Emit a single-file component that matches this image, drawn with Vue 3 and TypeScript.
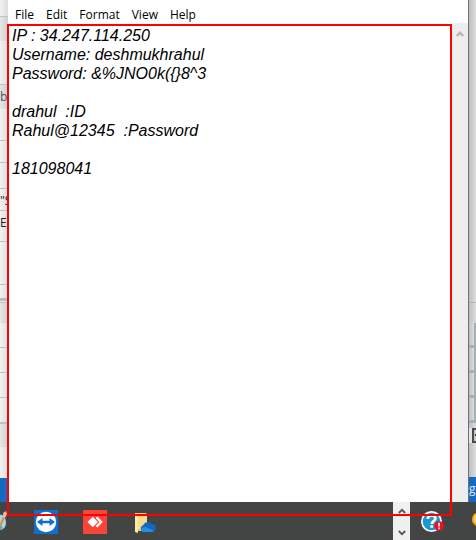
<script setup lang="ts">
import { ref } from 'vue'

interface Band {
  kind: string
  height: number
  text?: string
}

const menus: string[] = ['File', 'Edit', 'Format', 'View', 'Help']

const note = ref<string>(
  [
    'IP : 34.247.114.250',
    'Username: deshmukhrahul',
    'Password: &%JNO0k({}8^3',
    '',
    'drahul  :ID',
    'Rahul@12345  :Password',
    '',
    '181098041',
  ].join('\n'),
)

const leftBands: Band[] = [
  { kind: 'light', height: 17 },
  { kind: 'grey', height: 24 },
  { kind: 'light', height: 44 },
  { kind: 'grey', height: 24, text: 'b' },
  { kind: 'light', height: 32 },
  { kind: 'light', height: 22 },
  { kind: 'light', height: 26 },
  { kind: 'light', height: 22, text: '"S' },
  { kind: 'light', height: 31, text: 'Ex' },
  { kind: 'light', height: 43 },
  { kind: 'plain', height: 13 },
  { kind: 'rule', height: 3 },
  { kind: 'light', height: 2 },
  { kind: 'grey', height: 20 },
  { kind: 'light', height: 25 },
  { kind: 'light', height: 25 },
  { kind: 'light', height: 25 },
  { kind: 'plain', height: 24 },
  { kind: 'slate', height: 2 },
  { kind: 'grey', height: 23 },
  { kind: 'plain', height: 31 },
]

const rightBands: Band[] = [
  { kind: 'plain', height: 297 },
  { kind: 'rule', height: 3 },
  { kind: 'light', height: 3 },
  { kind: 'plain', height: 20 },
  { kind: 'cell', height: 25 },
  { kind: 'cell', height: 25 },
  { kind: 'cell', height: 25 },
  { kind: 'cell', height: 25 },
  { kind: 'plain', height: 5 },
  { kind: 'button', height: 15 },
  { kind: 'plain', height: 34 },
]
</script>

<template>
  <div class="screen">
    <div class="desktop">
      <div class="strip left">
        <div
          v-for="(band, i) in leftBands"
          :key="i"
          class="band"
          :class="band.kind"
          :style="{ height: band.height + 'px' }"
        >{{ band.text }}</div>
        <div class="band blue"></div>
      </div>

      <main class="window">
        <nav class="menubar">
          <button v-for="m in menus" :key="m" type="button">{{ m }}</button>
        </nav>
        <div class="editor">
          <textarea v-model="note" aria-label="Text editor" spellcheck="false"></textarea>
          <div class="scrollbar">
            <button type="button" aria-label="Scroll up">
              <svg width="8" height="6" viewBox="0 0 8 6"><path d="M0.8 5 4 1.8 7.2 5" fill="none" stroke="#b8b8b8" stroke-width="2.4" /></svg>
            </button>
          </div>
        </div>
      </main>

      <div class="strip right">
        <div
          v-for="(band, i) in rightBands"
          :key="i"
          class="band"
          :class="band.kind"
          :style="{ height: band.height + 'px' }"
        ></div>
        <div class="band blue">gu</div>
      </div>
    </div>

    <footer class="taskbar">
      <div class="apps">
        <button type="button" aria-label="Paint">
          <svg width="9" height="24" viewBox="0 0 9 24">
            <path d="M0 5C3 4 6 8 6 13c0 4-3 7-6 7z" fill="#a9d3e9" />
            <path d="M0 16c2 0 3 1 2 3L0 20z" fill="#5e9fc8" />
            <path d="M0 16 5 5" stroke="#e08a3c" stroke-width="2" />
            <path d="M3 3 6 1l1 3-2 4-2-1z" fill="#e6bd93" />
          </svg>
        </button>
        <button type="button" aria-label="TeamViewer">
          <svg width="24" height="24" viewBox="0 0 24 24">
            <rect width="24" height="24" fill="#0e6fd0" />
            <circle cx="12" cy="12" r="10.2" fill="#fff" />
            <path d="M3 12 8.5 8v2.8h7V8L21 12l-5.5 4v-2.8h-7V16z" fill="#0e6fd0" />
          </svg>
        </button>
        <button type="button" aria-label="AnyDesk">
          <svg width="24" height="24" viewBox="0 0 24 24">
            <rect width="24" height="24" fill="#fb4438" />
            <path d="M4.5 12 9.8 6.8 15 12l-5.2 5.2z" fill="#fff" />
            <path d="M12.6 8 14.3 6.4 19.8 12l-5.5 5.6-1.7-1.6 4-4z" fill="#fff" />
          </svg>
        </button>
        <button type="button" aria-label="OneDrive folder">
          <svg width="24" height="24" viewBox="0 0 24 24">
            <path d="M3 3h11l1 1v17H3z" fill="#ecc663" />
            <path d="M6 4h9v15H6z" fill="#f8dc8d" />
            <path d="M3 3l3 2v18l-3-1z" fill="#ffe8a6" />
            <path d="M12 22a3.5 3.5 0 0 1-.8-6.8 5 5 0 0 1 8.5-1.2A4 4 0 0 1 20 22z" fill="#1268bd" />
            <path d="M9 20c1-3 4-4 7-2l6 3-2 1h-8c-2 0-3-1-3-2z" fill="#2490e4" />
          </svg>
        </button>
      </div>
      <div class="spinner">
        <button type="button" aria-label="Previous row">
          <svg width="8" height="6" viewBox="0 0 8 6"><path d="M0.8 5 4 1.8 7.2 5" fill="none" stroke="#555" stroke-width="1.8" /></svg>
        </button>
        <button type="button" aria-label="Next row">
          <svg width="8" height="6" viewBox="0 0 8 6"><path d="M0.8 1 4 4.2 7.2 1" fill="none" stroke="#555" stroke-width="1.8" /></svg>
        </button>
      </div>
      <div class="tray">
        <button type="button" aria-label="Get help">
          <svg width="24" height="24" viewBox="0 0 24 24">
            <circle cx="10.5" cy="12.5" r="10.5" fill="#fff" />
            <circle cx="10.5" cy="12.5" r="8.8" fill="#1b97d4" />
            <path d="M6.8 9.8C7 7.4 8.6 6.4 10.6 6.4c2.2 0 3.8 1.2 3.8 3.1 0 2.6-3.6 2.6-3.6 5.4" fill="none" stroke="#fff" stroke-width="2.6" />
            <rect x="9.4" y="16.2" width="2.8" height="2.6" fill="#fff" />
            <circle cx="18" cy="17" r="4.8" fill="#ee1122" />
            <path d="M18 13.8v3.8M18 18.6v1.6" stroke="#fff" stroke-width="1.6" />
          </svg>
        </button>
        <button type="button" aria-label="Tips">
          <svg width="4" height="24" viewBox="0 0 4 24">
            <path d="M4 4C1 5 0 8 0 11c0 3 2 4 4 6z" fill="#f5a623" />
            <path d="M4 6C2 7 2 9 2 11l2 3z" fill="#ffd868" />
          </svg>
        </button>
      </div>
    </footer>

    <div class="marker"></div>
  </div>
</template>

<style>
body {
  margin: 0;
}
</style>

<style scoped>
.screen {
  position: relative;
  display: flex;
  flex-direction: column;
  height: 100vh;
  overflow: hidden;
}
button {
  border: 0;
  padding: 0;
  margin: 0;
  background: none;
  font: inherit;
  color: inherit;
}
svg {
  display: block;
}
.desktop {
  flex: 1;
  min-height: 0;
  display: flex;
}
.strip {
  flex: none;
  width: 8px;
  display: flex;
  flex-direction: column;
  overflow: hidden;
  background: #e4e4e4;
  font: 12px/24px "Open Sans", "Noto Sans", sans-serif;
  color: #222;
}
.band {
  flex: none;
  box-sizing: border-box;
  white-space: nowrap;
}
.left .band {
  background: linear-gradient(90deg, #f2f2f2, #dcdcdc);
}
.left .light {
  border-bottom: 1px solid #bcc5ce;
}
.left .grey {
  background: linear-gradient(90deg, #e6e6e6, #cfcfcf);
  color: #44506e;
}
.strip .rule {
  background: #bdbdbd;
}
.left .slate {
  background: #b9c3c9;
}
.right {
  box-sizing: border-box;
  border-left: 1px solid #707070;
}
.right .band {
  background: linear-gradient(90deg, #bebebe, #dedede);
}
.right .light {
  border-bottom: 1px solid #aab6bd;
}
.right .cell {
  border-right: 2px solid #a5b0b5;
  border-bottom: 3px solid #a5b0b5;
}
.right .button {
  margin-left: 3px;
  padding: 4px 0 0 1px;
  border: 2px solid #4a4a4a;
  border-right: 0;
}
.right .button::before {
  content: "";
  display: block;
  height: 2px;
  background: #333;
}
.left .blue,
.right .blue {
  flex: 1;
  background: #1769c0;
  color: #dce9f7;
}
.window {
  flex: 1;
  min-width: 0;
  display: flex;
  flex-direction: column;
  background: #fff;
}
.menubar {
  display: flex;
  gap: 12px;
  height: 16px;
  padding: 7px 7px 0;
  font: 12px/16px "Open Sans", "Noto Sans", sans-serif;
  color: #000;
}
.editor {
  flex: 1;
  min-height: 0;
  display: flex;
}
textarea {
  flex: 1;
  min-width: 0;
  box-sizing: border-box;
  border: 0;
  outline: 0;
  margin: 0;
  padding: 3px 4px;
  resize: none;
  overflow: hidden;
  background: #fff;
  color: #000;
  font: italic 16px/19px "Liberation Sans", Arial, sans-serif;
}
.scrollbar {
  flex: none;
  width: 16px;
  background: #eee;
}
.scrollbar button {
  display: flex;
  justify-content: center;
  width: 100%;
  padding-top: 8px;
}
.taskbar {
  flex: none;
  display: flex;
  height: 38px;
  background: #434444;
}
.apps {
  flex: 1;
  display: flex;
  align-items: center;
  gap: 25px;
  padding-top: 2px;
}
.spinner {
  display: flex;
  flex-direction: column;
  justify-content: space-between;
  align-items: center;
  box-sizing: border-box;
  width: 17px;
  padding: 6px 0 4px;
  background: #f0f0f0;
}
.tray {
  display: flex;
  align-items: center;
  justify-content: space-between;
  box-sizing: border-box;
  width: 66px;
  padding-left: 11px;
}
.marker {
  position: absolute;
  inset: 24px 24px 24px 7px;
  border: 2px solid #f00;
  pointer-events: none;
}
</style>
